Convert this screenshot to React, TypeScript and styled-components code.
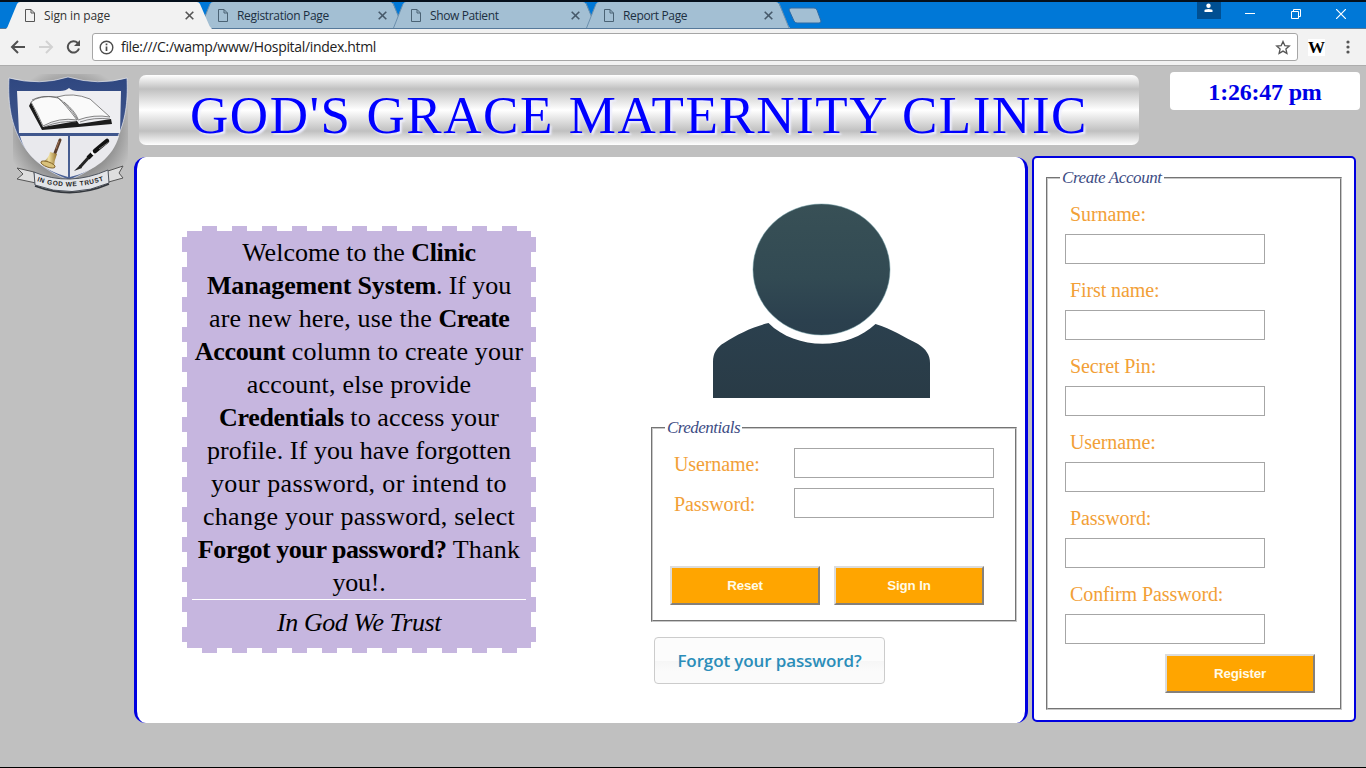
import React from "react";
import styled, { createGlobalStyle } from "styled-components";

const serif = '"Palatino Linotype", "Liberation Serif", serif';
const ui = '"Segoe UI", "Open Sans", sans-serif';

const GlobalStyle = createGlobalStyle`
  *, *::before, *::after { box-sizing: border-box; }
  body { margin: 0; background: #c0c0c0; overflow: hidden; }
`;

const Screen = styled.div`
  display: flex;
  flex-direction: column;
  width: 1366px;
  height: 768px;
  border-bottom: 1px solid #000;
  background: #c0c0c0;
`;

/* Browser window */
const TitleBar = styled.div`
  display: flex;
  justify-content: space-between;
  height: 29px;
  border-top: 2px solid #05101c;
  border-bottom: 1px solid #56799a;
  background: #0078d7;
`;

const TabStrip = styled.div`
  display: flex;
  padding-left: 6px;
`;

const Tab = styled.div<{ $active?: boolean }>`
  position: relative;
  z-index: ${(p) => (p.$active ? 1 : 0)};
  display: flex;
  align-items: center;
  width: 206px;
  height: 27px;
  margin-right: -13px;
  padding: 0 18px 1px 19px;
  color: ${(p) => (p.$active ? "#333" : "#1c2f42")};
`;

const TabShape = styled.svg<{ $active?: boolean }>`
  position: absolute;
  top: 0;
  left: 0;
  width: 206px;
  height: 27px;
  clip-path: inset(0 0 ${(p) => (p.$active ? 0 : 1)}px 0);
`;

const TabTitle = styled.span<{ $tracking: number }>`
  position: relative;
  flex: 1;
  padding-left: 9px;
  font: 12px ${ui};
  letter-spacing: ${(p) => p.$tracking}px;
  white-space: nowrap;
`;

const TabIcon = styled.svg`
  position: relative;
  flex: none;
`;

const NewTab = styled.svg`
  margin: 5px 0 0 10px;
`;

const WindowControls = styled.div`
  display: flex;
  height: 24px;
  padding-right: 2px;
`;

const ProfileButton = styled.div`
  display: flex;
  justify-content: center;
  width: 24px;
  height: 17px;
  margin-right: 7px;
  background: #004f92;
`;

const WindowButton = styled.div`
  display: flex;
  align-items: center;
  justify-content: center;
  width: 45.5px;
`;

const AddressRow = styled.div`
  display: flex;
  align-items: center;
  height: 37px;
  padding: 0 8px 0 10px;
  border-bottom: 1px solid #adadad;
  background: #f2f2f2;
`;

const NavIcon = styled.svg`
  flex: none;
  margin-right: 12px;
`;

const AddressBox = styled.div`
  display: flex;
  align-items: center;
  width: 1206px;
  height: 28px;
  padding: 0 6px;
  border: 1px solid #a6a6a6;
  border-radius: 3px;
  background: #fff;
`;

const Address = styled.span`
  flex: 1;
  padding: 0 0 1px 7px;
  color: #222;
  font: 14px ${ui};
  letter-spacing: -0.33px;
`;

const Extension = styled.span`
  width: 17px;
  margin-left: 10px;
  background: #fff;
  color: #000;
  font: bold 17px/17px ${serif};
  text-align: center;
`;

const MenuDots = styled.svg`
  margin-left: 21px;
`;

/* Page */
const Page = styled.div`
  display: grid;
  grid-template-columns: 134px 1fr;
  padding-right: 6px;
`;

const LogoCell = styled.div`
  padding: 6px 0 0 5px;
`;

const Header = styled.header`
  display: flex;
  justify-content: space-between;
  align-items: flex-start;
  height: 90px;
  padding-left: 5px;
`;

const Banner = styled.h1`
  width: 1000px;
  height: 70px;
  margin: 9px 0 0;
  border-radius: 7px;
  background: linear-gradient(#fff 0%, #c0c0c0 20%, #fff 50%, #c0c0c0 80%, #fff 100%);
  color: #00f;
  font: 53px/80px ${serif};
  letter-spacing: 1.57px;
  text-align: center;
  text-shadow: 2px 2px 2px #eef;
  white-space: nowrap;
`;

const Clock = styled.div`
  width: 190px;
  height: 38px;
  margin-top: 6px;
  border-radius: 4px;
  background: #fff;
  color: #0000e6;
  font: bold 24px/40px ${serif};
  letter-spacing: -0.2px;
  text-align: center;
`;

const Columns = styled.main`
  display: flex;
  align-items: flex-start;
  gap: 4px;
`;

const MainPanel = styled.section`
  display: flex;
  align-items: flex-start;
  width: 894px;
  height: 566px;
  margin-top: 1px;
  padding-left: 45px;
  border: solid #0000e0;
  border-width: 0 3px;
  border-radius: 12px;
  background: #fff;
`;

const dash = "#c6b6df 0 15px, transparent 15px 30px";
const Welcome = styled.div`
  width: 354px;
  height: 427px;
  margin-top: 69px;
  padding: 10px 10px 0;
  background:
    linear-gradient(#c6b6df, #c6b6df) 5px 5px / 344px 417px no-repeat,
    repeating-linear-gradient(90deg, ${dash}) 20px 0 / 315px 5px no-repeat,
    repeating-linear-gradient(90deg, ${dash}) 20px 100% / 315px 5px no-repeat,
    repeating-linear-gradient(180deg, ${dash}) 0 11px / 5px 405px no-repeat,
    repeating-linear-gradient(180deg, ${dash}) 100% 11px / 5px 405px no-repeat;
  color: #000;
  font: 26px/33px ${serif};
  text-align: center;
`;

const WelcomeText = styled.p`
  margin: 0 -10px;
`;

const Line = styled.span<{ $tracking?: number }>`
  display: block;
  white-space: nowrap;
  letter-spacing: ${(p) => p.$tracking ?? 0.2}px;
`;

const Strong = styled.b<{ $tracking?: number }>`
  letter-spacing: ${(p) => p.$tracking ?? -0.3}px;
`;

const Motto = styled.p`
  margin: 0;
  padding-top: 6px;
  border-top: 1px solid #fff;
  font-style: italic;
  letter-spacing: -0.42px;
`;

const SignIn = styled.div`
  display: flex;
  flex-direction: column;
  align-items: flex-start;
  margin-left: 115px;
`;

const Avatar = styled.svg`
  margin: 43px 0 21px 61px;
`;

const Group = styled.fieldset<{ $width: number; $height: number }>`
  min-width: 0;
  width: ${(p) => p.$width}px;
  height: ${(p) => p.$height}px;
  margin: 0;
  padding: 0 0 0 14px;
  border: 2px groove #c8c8c8;
`;

const Legend = styled.legend<{ $tracking: number }>`
  height: 18px;
  margin-left: -2px;
  padding: 0 2px;
  color: #3d4c84;
  font: italic 17px/18px ${serif};
  letter-spacing: ${(p) => p.$tracking}px;
`;

const Field = styled.label<{ $stacked?: boolean }>`
  display: flex;
  flex-direction: ${(p) => (p.$stacked ? "column" : "row")};
  height: ${(p) => (p.$stacked ? 76 : 40)}px;
  margin-left: ${(p) => (p.$stacked ? 3 : 7)}px;
`;

const FieldName = styled.span<{ $stacked?: boolean }>`
  width: ${(p) => (p.$stacked ? "auto" : "120px")};
  height: 32px;
  padding-left: ${(p) => (p.$stacked ? 5 : 0)}px;
  margin-bottom: ${(p) => (p.$stacked ? 4 : 0)}px;
  color: #f2a037;
  font: 20px/32px ${serif};
  letter-spacing: -0.1px;
`;

const TextInput = styled.input`
  width: 200px;
  height: 30px;
  flex: none;
  border: 1px solid #a6a6a6;
  background: #fff;
`;

const LoginFields = styled.div`
  height: 129px;
  padding-top: 11px;
`;

const AccountFields = styled.div`
  height: 467px;
  padding-top: 11px;
`;

const ButtonRow = styled.div<{ $indent: number }>`
  display: flex;
  gap: 14px;
  padding-left: ${(p) => p.$indent}px;
`;

const OrangeButton = styled.button`
  width: 150px;
  height: 39px;
  padding: 0;
  border: 2px solid;
  border-color: #dcdcdc #85807a #85807a #dcdcdc;
  background: #ffa500;
  color: #fffbe8;
  font: bold 13.33px "Liberation Sans", sans-serif;
  letter-spacing: -0.15px;
`;

const ForgotButton = styled.button`
  width: 231px;
  height: 47px;
  margin: 15px 0 0 3px;
  padding: 0;
  border: 1px solid #ccc;
  border-radius: 4px;
  background: linear-gradient(#fcfcfc 0 50%, #f6f6f6 50%, #fbfbfb 75%);
  color: #2b8db9;
  font: 600 17px "Trebuchet MS", "Open Sans", sans-serif;
  letter-spacing: -0.12px;
`;

const SidePanel = styled.aside`
  width: 324px;
  height: 566px;
  padding: 11px 0 0 12px;
  border: 2px solid #0000e0;
  border-radius: 5px;
  background: #fff;
`;

const tabs = [
  { title: "Sign in page", tracking: -0.11 },
  { title: "Registration Page", tracking: -0.32 },
  { title: "Show Patient", tracking: -0.38 },
  { title: "Report Page", tracking: -0.36 },
];

const accountFields = ["Surname:", "First name:", "Secret Pin:", "Username:", "Password:", "Confirm Password:"];

function BrowserTab({ title, tracking, active }: { title: string; tracking: number; active?: boolean }) {
  return (
    <Tab $active={active}>
      <TabShape $active={active} viewBox="0 0 206 27">
        <path d="M0 27 L1.5 25 L11 2 Q12 0 14 0 H191 Q193 0 194 2 L203.500 24 L206 27 Z" fill={active ? "#f2f2f2" : "#a3bfd3"} />
        {!active && <path d="M1.500 26 L11 2 M194 1 L204 26" stroke="#6c90ad" fill="none" />}
      </TabShape>
      <TabIcon width="10" height="13" viewBox="0 0 10 13" fill="none" stroke={active ? "#555" : "#4b6375"}>
        <path d="M.5 .5 H6 L9.500 4 V12.500 H.5 Z M6 .5 V4 H9.500" />
      </TabIcon>
      <TabTitle $tracking={tracking}>{title}</TabTitle>
      <TabIcon width="9" height="9" viewBox="0 0 9 9" stroke={active ? "#555" : "#46596a"} strokeWidth="1.600">
        <path d="M.7 .7 L8.300 8.300 M8.300 .7 L.7 8.300" />
      </TabIcon>
    </Tab>
  );
}

function Crest() {
  return (
    <svg width="126" height="124" viewBox="5 72 126 124">
      <defs>
        <radialGradient id="halo">
          <stop offset="0.7" stopColor="#929292" />
          <stop offset="1" stopColor="#c0c0c0" />
        </radialGradient>
        <linearGradient id="blue" x2="0" y2="1">
          <stop offset="0" stopColor="#2f4780" />
          <stop offset="1" stopColor="#4d6397" />
        </linearGradient>
        <linearGradient id="brass">
          <stop offset="0" stopColor="#6f5523" />
          <stop offset=".45" stopColor="#f2e2a3" />
          <stop offset="1" stopColor="#93702b" />
        </linearGradient>
        <path id="motto" d="M37 181 Q69 192.500 107 179.500" />
        <clipPath id="haloBox"><rect x="13" y="74" width="115" height="112" /></clipPath>
      </defs>
      <circle cx="70" cy="131" r="65" fill="url(#halo)" clipPath="url(#haloBox)" />
      <path d="M9 78 Q40 86 68 77 Q98 86 127 78 C129 116 121 160 69 180 C15 160 7 116 9 78 Z" fill="url(#blue)" stroke="#e5e8f0" strokeWidth=".7" />
      <path d="M17 91 L60 91 Q66 91 69 88 Q72 91 78 91 L121 91 L120 133 H19 Z" fill="#eeeef1" />
      <path d="M20 136 H68 V177 C42 170 25 155 20 136 Z M70 136 H119 C113 157 95 171 70 177 Z" fill="#e9e9ed" />
      <path d="M29 106 L31 102 L43 127 L77 121 L79 124 L111 119 L112 124 L78 127 L42 130 Z" fill="#1c1c1c" />
      <path d="M31 102 Q39 95 57 97 Q66 105 77 120 Q59 117 43 126 Q38 114 31 102 Z M57 97 Q73 92 90 99 L110 117 Q94 114 78 120 Q69 105 57 97 Z" fill="#fafafa" stroke="#777" strokeWidth=".9" />
      <path d="M32 100 Q43 94 58 98 M64 102 Q75 111 78 119 M44 127 Q61 120 76 122 M80 122 Q94 117 110 119" fill="none" stroke="#555" strokeWidth=".7" />
      <path d="M60 140 L55 153" stroke="#583d2d" strokeWidth="3" strokeLinecap="round" />
      <path d="M59 141 L56 149" stroke="#9d7052" strokeWidth="1" />
      <path d="M50 152 L57 154 Q54 161 54 167 L42 163 Q49 158 50 152 Z" fill="url(#brass)" />
      <ellipse cx="48" cy="164.500" rx="7.500" ry="2.600" transform="rotate(20 48 164.500)" fill="#d9c27c" stroke="#73541c" strokeWidth=".8" />
      <path d="M80 167 L89 157" stroke="#252525" strokeWidth="3" />
      <path d="M74 171 L80 165 L82 168 Z" fill="#222" />
      <path d="M88 158 L92 154" stroke="#111" strokeWidth="4" />
      <path d="M92 154 L95 151" stroke="#fff" strokeWidth="3.500" />
      <path d="M95 151 L107 141" stroke="#111" strokeWidth="4.500" strokeLinecap="round" />
      <path d="M99 149 L109 142" stroke="#777" strokeWidth="1" />
      <path d="M17 168 L34 172 L36 183 L17 179 L23 174 Z M105 172 L123 166 L119 173 L123 178 L105 183 Z" fill="#dedede" stroke="#555" strokeWidth="1" />
      <path d="M34 172 Q69 187 108 170 L109 183 Q72 199 35 185 Z" fill="#e2e4e8" stroke="#4d535d" strokeWidth="1" />
      <path d="M35 186 Q72 200 109 184" fill="none" stroke="#34383e" strokeWidth="1.800" />
      <text fontFamily="Liberation Sans" fontWeight="bold" fontSize="6.500" fill="#222">
        <textPath href="#motto" textLength="68">IN GOD WE TRUST</textPath>
      </text>
    </svg>
  );
}

function PersonPicture() {
  return (
    <Avatar width="220" height="198" viewBox="712 200 220 198">
      <defs>
        <linearGradient id="person" gradientUnits="userSpaceOnUse" x1="0" y1="204" x2="0" y2="398">
          <stop offset="0" stopColor="#385056" />
          <stop offset=".38" stopColor="#324a53" />
          <stop offset=".6" stopColor="#2b404e" />
          <stop offset="1" stopColor="#293b46" />
        </linearGradient>
      </defs>
      <ellipse cx="821.5" cy="269.500" rx="68.500" ry="65.500" fill="url(#person)" stroke="#6b99a0" strokeWidth=".5" />
      <path d="M713 398 V362 C713 353 717 347 724 343 C738 334 752 327 768.500 323 C796 350.500 848 350.500 875.500 324 C892 329 904 337 918 344 C926 349 930 355 930 363 V398 Z" fill="url(#person)" />
    </Avatar>
  );
}

export default function App() {
  return (
    <Screen>
      <GlobalStyle />
      <TitleBar>
        <TabStrip>
          {tabs.map((t, i) => (
            <BrowserTab key={t.title} title={t.title} tracking={t.tracking} active={i === 0} />
          ))}
          <NewTab width="34" height="17" viewBox="0 0 34 17">
            <path d="M3 1 H26 Q28 1 29 3 L33 14 Q33 16 31 16 H9 Q7 16 6 14 L1 3 Q1 1 3 1 Z" fill="#a3bfd3" stroke="#2c6ba6" />
          </NewTab>
        </TabStrip>
        <WindowControls>
          <ProfileButton>
            <svg width="9" height="10" viewBox="0 0 9 10" fill="#fff">
              <circle cx="4.500" cy="3.700" r="2.200" />
              <path d="M.5 10 V8.500 Q.5 7 4.500 7 Q8.500 7 8.500 8.500 V10 Z" />
            </svg>
          </ProfileButton>
          <WindowButton>
            <svg width="10" height="10"><path d="M0 4.500 H10" stroke="#fff" /></svg>
          </WindowButton>
          <WindowButton>
            <svg width="10" height="10" fill="none" stroke="#fff"><path d="M.5 2.500 H7.500 V9.500 H.5 Z M2.500 2.500 V.5 H9.500 V7.500 H7.500" /></svg>
          </WindowButton>
          <WindowButton>
            <svg width="10" height="10" stroke="#fff" strokeWidth="1.200"><path d="M0 0 L10 10 M10 0 L0 10" /></svg>
          </WindowButton>
        </WindowControls>
      </TitleBar>

      <AddressRow>
        <NavIcon width="16" height="14" viewBox="0 0 16 14" fill="none" stroke="#505050" strokeWidth="2">
          <path d="M15 7 H2 M8 1 L2 7 L8 13" />
        </NavIcon>
        <NavIcon width="16" height="14" viewBox="0 0 16 14" fill="none" stroke="#d2d2d2" strokeWidth="2">
          <path d="M1 7 H14 M8 1 L14 7 L8 13" />
        </NavIcon>
        <NavIcon width="14" height="14" viewBox="-1 0 14 14" fill="none" stroke="#505050" strokeWidth="2">
          <path d="M12 8.500 A5.700 5.700 0 1 1 10.700 3" />
          <path d="M13 0 V6 H7 Z" fill="#505050" stroke="none" />
        </NavIcon>
        <AddressBox>
          <svg width="15" height="15" viewBox="0 0 15 15" fill="none" stroke="#4c4c4c" strokeWidth="1.400">
            <circle cx="7.500" cy="7.500" r="6.300" />
            <path d="M7.500 6.500 V11 M7.500 3.600 V5.200" strokeWidth="1.700" />
          </svg>
          <Address>file:///C:/wamp/www/Hospital/index.html</Address>
          <svg width="16" height="15" viewBox="0 0 16 15" fill="none" stroke="#555" strokeWidth="1.300">
            <path d="M8 1.500 L9.800 5.600 L14.300 6 L10.900 9 L11.900 13.400 L8 11.100 L4.100 13.400 L5.100 9 L1.700 6 L6.200 5.600 Z" />
          </svg>
        </AddressBox>
        <Extension>W</Extension>
        <MenuDots width="4" height="14" fill="#555">
          <circle cx="2" cy="2" r="1.600" />
          <circle cx="2" cy="7" r="1.600" />
          <circle cx="2" cy="12" r="1.600" />
        </MenuDots>
      </AddressRow>

      <Page>
        <LogoCell>
          <Crest />
        </LogoCell>
        <div>
          <Header>
            <Banner>GOD'S GRACE MATERNITY CLINIC</Banner>
            <Clock>1:26:47 pm</Clock>
          </Header>
          <Columns>
            <MainPanel>
              <Welcome>
                <WelcomeText>
                  <Line $tracking={0}>Welcome to the <Strong>Clinic</Strong></Line>
                  <Line $tracking={-0.1}><Strong $tracking={-0.16}>Management System</Strong>. If you</Line>
                  <Line>are new here, use the <Strong $tracking={-0.7}>Create</Strong></Line>
                  <Line><Strong>Account</Strong> column to create your</Line>
                  <Line>account, else provide</Line>
                  <Line $tracking={0.1}><Strong>Credentials</Strong> to access your</Line>
                  <Line $tracking={0.07}>profile. If you have forgotten</Line>
                  <Line $tracking={0.4}>your password, or intend to</Line>
                  <Line $tracking={0.26}>change your password, select</Line>
                  <Line><Strong $tracking={-0.45}>Forgot your password?</Strong> Thank</Line>
                  <Line $tracking={-0.2}>you!.</Line>
                </WelcomeText>
                <Motto>In God We Trust</Motto>
              </Welcome>
              <SignIn>
                <PersonPicture />
                <Group $width={366} $height={203}>
                  <Legend $tracking={-0.52}>Credentials</Legend>
                  <LoginFields>
                    <Field><FieldName>Username:</FieldName><TextInput /></Field>
                    <Field><FieldName>Password:</FieldName><TextInput type="password" /></Field>
                  </LoginFields>
                  <ButtonRow $indent={3}>
                    <OrangeButton>Reset</OrangeButton>
                    <OrangeButton>Sign In</OrangeButton>
                  </ButtonRow>
                </Group>
                <ForgotButton>Forgot your password?</ForgotButton>
              </SignIn>
            </MainPanel>
            <SidePanel>
              <Group $width={296} $height={541}>
                <Legend $tracking={-0.4}>Create Account</Legend>
                <AccountFields>
                  {accountFields.map((name) => (
                    <Field key={name} $stacked>
                      <FieldName $stacked>{name}</FieldName>
                      <TextInput type={name.includes("Password") ? "password" : "text"} />
                    </Field>
                  ))}
                </AccountFields>
                <ButtonRow $indent={103}>
                  <OrangeButton>Register</OrangeButton>
                </ButtonRow>
              </Group>
            </SidePanel>
          </Columns>
        </div>
      </Page>
    </Screen>
  );
}
